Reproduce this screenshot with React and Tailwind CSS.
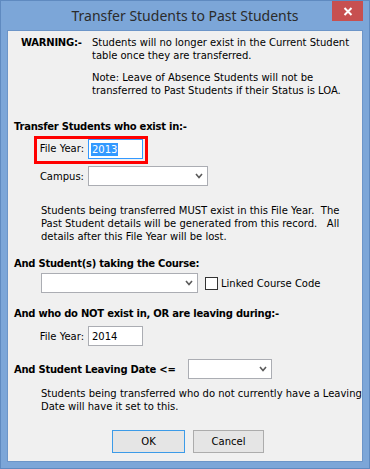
import React from "react";

function Chevron() {
  return (
    <svg width="8" height="6" viewBox="0 0 8 6" className="block">
      <polyline points="1,1 4,4.5 7,1" fill="none" stroke="#5a5a5a" strokeWidth="1.6" />
    </svg>
  );
}

function Select({ w }) {
  return (
    <div className={`${w} h-[20px] bg-white border border-[#abadb3] flex items-center justify-end pr-[4px] shrink-0`}>
      <Chevron />
    </div>
  );
}

export default function App() {
  return (
    <div className="w-[370px] h-[469px] bg-[#7ca6d8] border border-[#5f8ac0] flex flex-col font-['DejaVu_Sans',sans-serif] text-[10px] leading-[13px] text-black">
      <div className="h-[29px] relative flex items-center justify-center">
        <span className="font-['Noto_Sans',sans-serif] text-[14px] text-[#2b2b2b] leading-none mt-[1px]">
          Transfer Students to Past Students
        </span>
        <div className="absolute right-[6px] top-0 w-[31px] h-[20px] bg-[#c75050] flex items-center justify-center">
          <svg width="10" height="9" viewBox="0 0 10 9">
            <path d="M1.5 1 L8.5 8 M8.5 1 L1.5 8" stroke="white" strokeWidth="2" />
          </svg>
        </div>
      </div>
      <div className="mx-[6px] mb-[6px] h-[432px] bg-[#f0f0f0] border border-[#6c95c8] pl-[6px] flex flex-col">
        <div className="flex mt-[5px]">
          <div className="w-[78px] pl-[7px] font-bold tracking-[-0.25px] shrink-0">WARNING:-</div>
          <div className="flex flex-col gap-[9px] whitespace-nowrap">
            <div>
              Students will no longer exist in the Current Student
              <br />
              table once they are transferred.
            </div>
            <div>
              Note: Leave of Absence Students will not be
              <br />
              transferred to Past Students if their Status is LOA.
            </div>
          </div>
        </div>

        <div className="mt-[23px] font-bold tracking-[-0.25px]">Transfer Students who exist in:-</div>
        <div className="mt-[3px] ml-[20px] w-[114px] h-[28px] border-[3px] border-[#ff0000] flex items-start">
          <div className="w-[47px] text-right h-[20px] leading-[20px]">File Year:</div>
          <div className="ml-[4px] w-[55px] h-[20px] bg-white border border-[#3399ff] flex items-center pl-[2px]">
            <span className="bg-[#3399ff] text-white px-[1px] leading-[13px]">2013</span>
          </div>
        </div>
        <div className="mt-[2px] flex items-center">
          <div className="w-[70px] text-right">Campus:</div>
          <div className="ml-[4px]">
            <Select w="w-[120px]" />
          </div>
        </div>

        <div className="mt-[18px] pl-[27px] whitespace-nowrap">
          Students being transferred MUST exist in this File Year.&nbsp; The
          <br />
          Past Student details will be generated from this record.&nbsp;&nbsp; All
          <br />
          details after this File Year will be lost.
        </div>

        <div className="mt-[14px] font-bold tracking-[-0.25px]">And Student(s) taking the Course:</div>
        <div className="mt-[3px] pl-[27px] flex items-center">
          <Select w="w-[157px]" />
          <div className="ml-[7px] w-[13px] h-[13px] bg-white border border-[#333333]" />
          <div className="ml-[3px]">Linked Course Code</div>
        </div>

        <div className="mt-[14px] font-bold tracking-[-0.25px]">And who do NOT exist in, OR are leaving during:-</div>
        <div className="mt-[6px] flex items-center">
          <div className="w-[70px] text-right">File Year:</div>
          <div className="ml-[4px] w-[55px] h-[20px] bg-white border border-[#abadb3] flex items-center pl-[3px]">
            2014
          </div>
        </div>

        <div className="mt-[13px] flex items-center">
          <div className="w-[174px] font-bold tracking-[-0.25px]">And Student Leaving Date &lt;=</div>
          <Select w="w-[84px]" />
        </div>

        <div className="mt-[8px] pl-[27px] whitespace-nowrap">
          Students being transferred who do not currently have a Leaving
          <br />
          Date will have it set to this.
        </div>

        <div className="mt-[17px] flex justify-center gap-[8px]">
          <button className="w-[73px] h-[23px] border border-[#3c9be8] bg-[#e5e5e5] text-black">OK</button>
          <button className="w-[71px] h-[23px] border border-[#acacac] bg-[#e5e5e5] text-black">Cancel</button>
        </div>
      </div>
    </div>
  );
}
